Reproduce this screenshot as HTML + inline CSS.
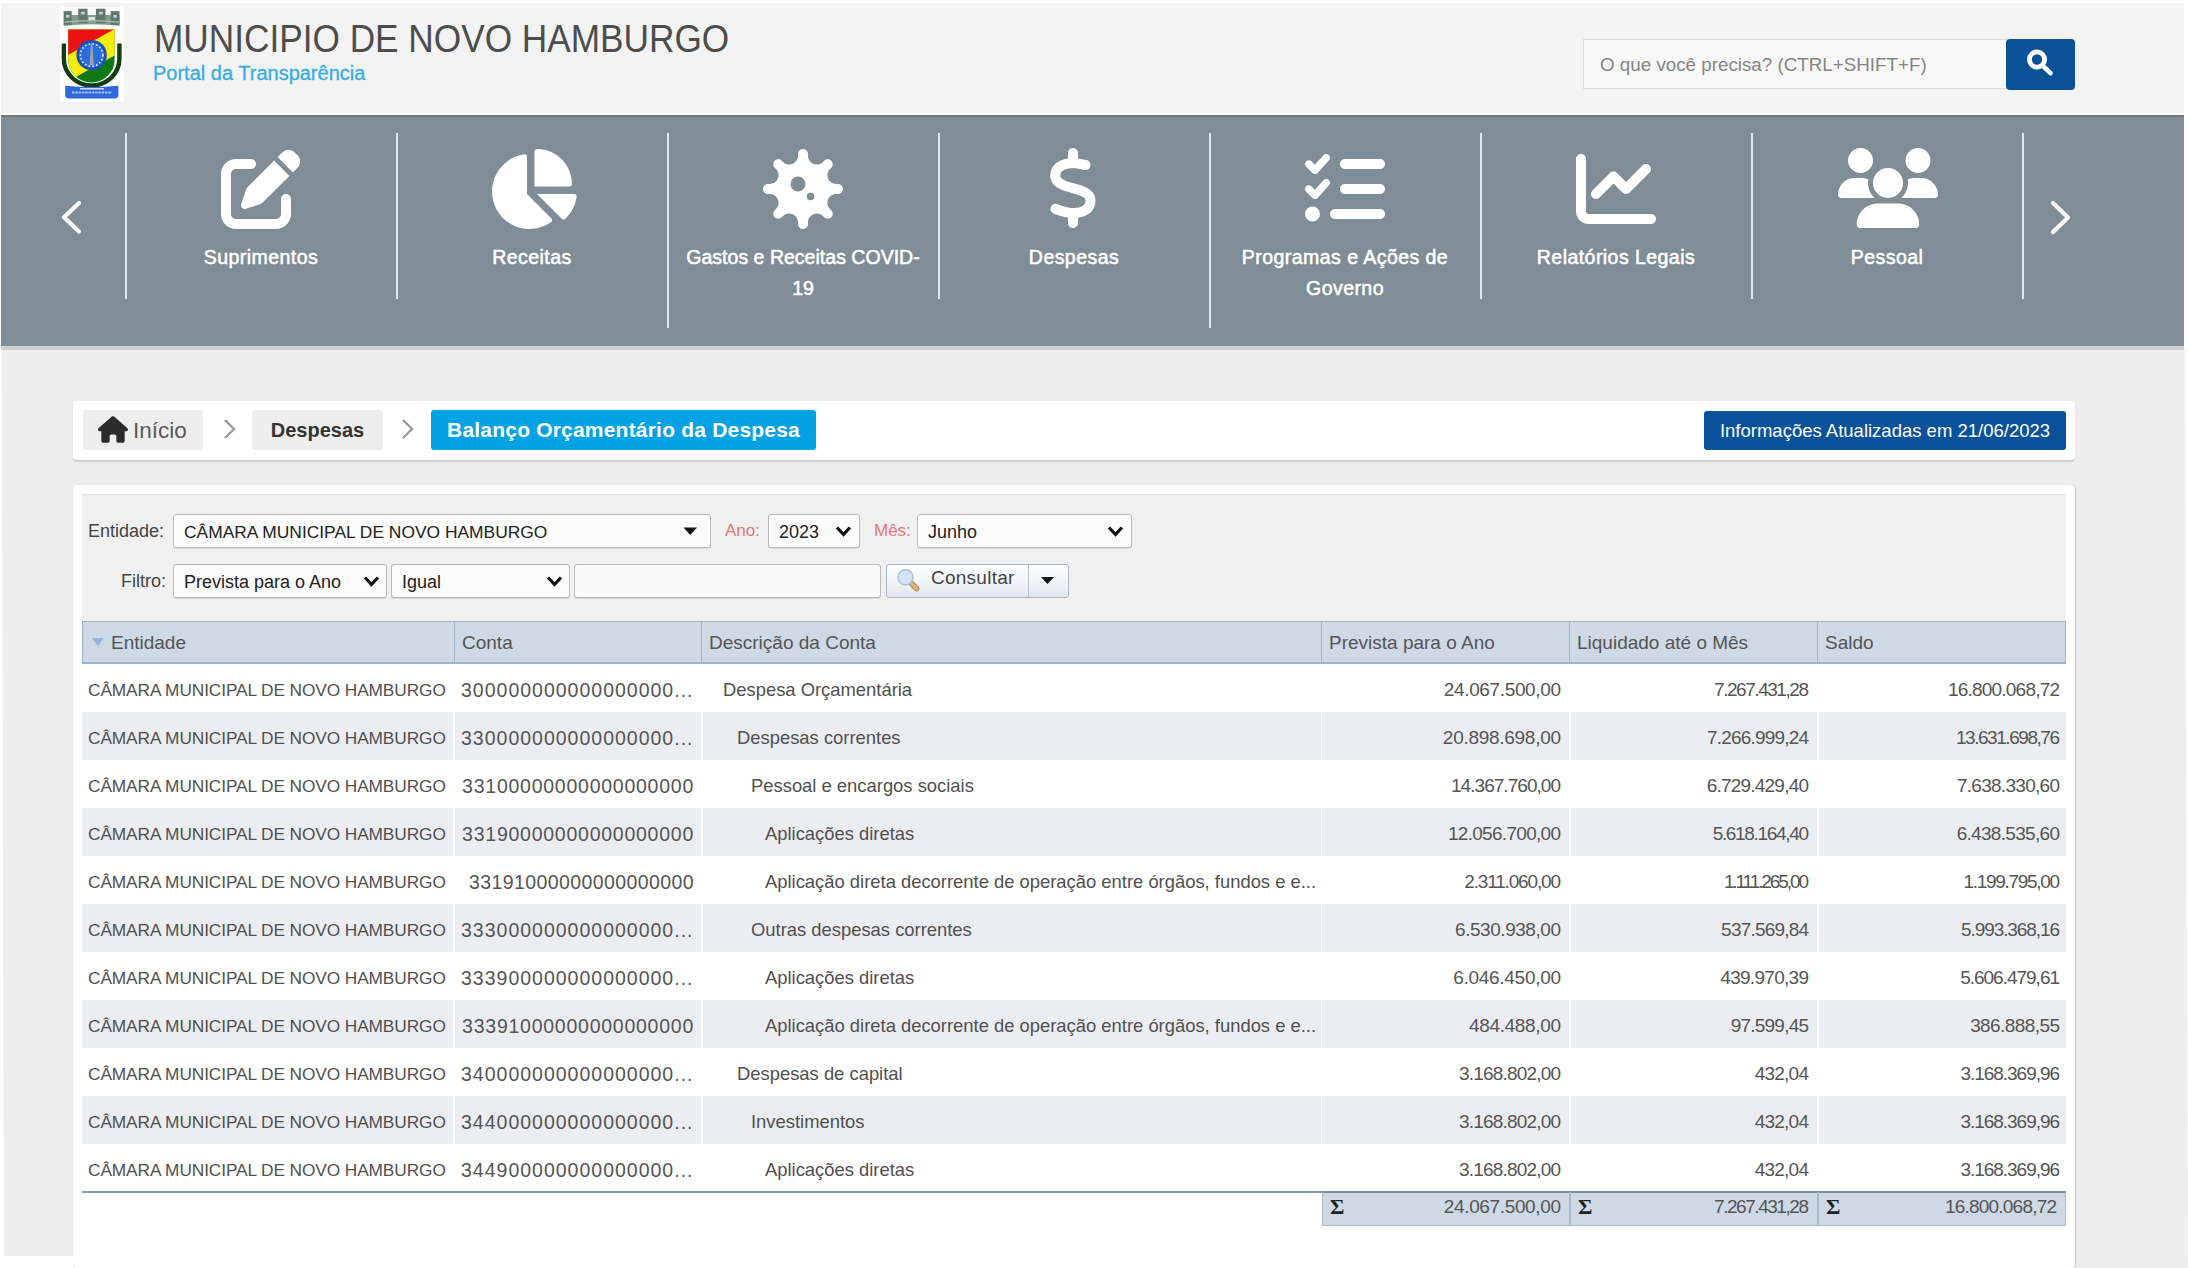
<!DOCTYPE html>
<html><head><meta charset="utf-8">
<style>
*{box-sizing:border-box;margin:0;padding:0}
html,body{width:2188px;height:1268px;overflow:hidden;background:#fff;font-family:"Liberation Sans",sans-serif}
.a{position:absolute}
#hdr{left:1px;top:3px;width:2183px;height:110px;background:#f3f3f3}
#title{left:154px;top:17px;font-size:39px;color:#4d4d4d;white-space:nowrap;transform:scaleX(0.903);transform-origin:0 0}
#sub{left:153px;top:62px;font-size:20px;color:#38ade3;white-space:nowrap;-webkit-text-stroke:0.3px #38ade3}
#search{left:1583px;top:39px;width:424px;height:50px;background:#f8f8f8;border:1px solid #dcdcdc;border-right:none}
#search span{position:absolute;left:16px;top:14px;font-size:18.8px;color:#858585;white-space:nowrap}
#sbtn{left:2006px;top:39px;width:69px;height:51px;background:#0a5197;border-radius:4px}
#nav{left:1px;top:115px;width:2183px;height:231px;background:#7f8d96;border-top:2px solid #6f7a80}
#navsh{left:1px;top:346px;width:2183px;height:4px;background:#d0d0d0}
#content{left:0;top:350px;width:2188px;height:918px;background:#eeeeee;clip-path:polygon(1.5px 0,2185px 0,2188px 918px,73px 918px,73px 906px,4px 906px)}
#contentR{display:none}
.div{width:2px;background:#dde8ef}
.lbl{color:#fff;font-weight:normal;font-size:19.5px;letter-spacing:0.45px;-webkit-text-stroke:0.55px #fff;text-align:center;line-height:31px;width:240px;white-space:nowrap}
.ico{fill:#fff}
#crumbs{left:73px;top:401px;width:2002px;height:59px;background:#fff;border-radius:4px;box-shadow:0 2px 1px #cfcfcf}
.crumb{height:40px;top:410px;border-radius:3px;font-size:20px;line-height:40px;white-space:nowrap}
#panel{left:73px;top:485px;width:2002px;height:783px;background:#fff;border-radius:4px;box-shadow:1px 0 1px #c8c8c8}
#fpanel{left:82px;top:494px;width:1984px;height:127px;background:#f0f0f0;border-top:1px solid #e0e0e0}
.flbl{font-size:18px;color:#444;white-space:nowrap;margin-top:1px}
.sel{background:#fbfbfc;border:1px solid #b9b9bb;border-radius:3px;box-shadow:0 1px 0 #d8d8d8;font-size:18px;color:#222;white-space:nowrap;line-height:34px;padding-left:10px}
.th{top:621px;height:43px;background:#cdd9e5;border-top:1px solid #9fb3c8;border-bottom:2px solid #9fb3c8;font-size:19px;color:#555;line-height:42px;padding-left:7px;white-space:nowrap}
.row{left:82px;width:1984px;height:48px}
.c{position:absolute;top:0;height:48px;line-height:52px;font-size:17px;color:#505050;white-space:nowrap;overflow:hidden}
.alt .c{background:#ebedf2}
.r{text-align:right}

.ent{font-size:17.3px;letter-spacing:-0.1px}
.cod{font-size:19.5px;letter-spacing:0.5px;color:#555}
.dsc{font-size:18.4px}
.num{font-size:19px;line-height:51px;color:#555}
.sum{top:1191px;width:248px;height:35px;background:#cdd9e5;border-top:2px solid #7e8c9a;border-bottom:1px solid #a9bbcf;border-left:1px solid #a9bbcf;border-right:1px solid #a9bbcf;font-family:"Liberation Serif",serif;font-weight:bold;font-size:22px;color:#222;line-height:27px;padding-left:7px}
.sum > span{position:absolute;right:8px;top:0;font-family:"Liberation Sans",sans-serif;font-weight:normal;font-size:19px;color:#555}
</style></head><body>
<div class="a" id="hdr"></div>
<!-- logo -->
<svg class="a" style="left:60px;top:7px" width="64" height="95" viewBox="0 0 64 95">
  <defs><clipPath id="sh"><path d="M8.2 22.5 H54.6 V53 A23.2 22.4 0 0 1 8.2 53 Z"/></clipPath></defs>
  <rect x="0" y="0" width="64" height="95" fill="#fcfcfc"/>
  <path d="M4 8 H59.5 V18.8 Q31.6 15.8 4 18.8 Z" fill="#86998f"/>
  <rect x="3.6" y="4.1" width="8.1" height="14" fill="#62786e"/>
  <rect x="18.2" y="1.7" width="9.3" height="14.5" fill="#62786e"/>
  <rect x="35.9" y="1.7" width="9.6" height="14.5" fill="#62786e"/>
  <rect x="50.8" y="4.1" width="8.7" height="14" fill="#62786e"/>
  <rect x="6" y="8" width="3.4" height="2.6" fill="#c3d4cb"/><rect x="21" y="4.8" width="3.8" height="2.6" fill="#c3d4cb"/>
  <rect x="39" y="4.8" width="3.8" height="2.6" fill="#c3d4cb"/><rect x="53.4" y="8" width="3.4" height="2.6" fill="#c3d4cb"/>
  <rect x="28.5" y="10" width="6.5" height="4" fill="#d7e3dc"/>
  <path d="M4.5 15.2 Q31.6 12 59 15.2" fill="none" stroke="#a9bcb2" stroke-width="1.3"/>
  <g clip-path="url(#sh)">
    <rect x="0" y="0" width="64" height="95" fill="#0f7a13"/>
    <path d="M0 0 H64 V43.3 L0 78.8 Z" fill="#f4ee0a"/>
    <path d="M0 0 H64 V16.7 L0 52.5 Z" fill="#ec1010"/>
  </g>
  <circle cx="31.6" cy="48.1" r="15.2" fill="#1d4fb8"/>
  <circle cx="31.6" cy="48.1" r="12.6" fill="#2c6ee0"/>
  <circle cx="31.6" cy="48.1" r="11.2" fill="none" stroke="#e8eef8" stroke-width="1.6" stroke-dasharray="1.6 2.2"/>
  <path d="M31 37 h1.3 l1.5 21 h-4.3z" fill="#98a3a3"/>
  <path d="M1.7 36.4 H6 V52 A25.6 24.3 0 0 0 57.2 52 V36.4 H61.6 V52 A29.9 28.6 0 0 1 1.7 52 Z" fill="#123d10"/>
  <path d="M5.2 78.8 Q31.6 81.5 58.4 78.8 V88 Q58.4 91.5 54 91.5 H9.6 Q5.2 91.5 5.2 88 Z" fill="#2e68dc"/>
  <path d="M12 85.5 H52" fill="none" stroke="#a9c2f2" stroke-width="2.2" stroke-dasharray="2.5 0.8"/>
  <path d="M20 81.8 H44" fill="none" stroke="#dfe8fb" stroke-width="1.4"/>
</svg>
<div class="a" id="title">MUNICIPIO DE NOVO HAMBURGO</div>
<div class="a" id="sub">Portal da Transparência</div>
<div class="a" id="search"><span>O que você precisa? (CTRL+SHIFT+F)</span></div>
<div class="a" id="sbtn">
  <svg class="a" style="left:0;top:0" width="69" height="51" viewBox="0 0 69 51"><circle cx="31" cy="20.5" r="7.6" fill="none" stroke="#fff" stroke-width="4.8"/><path d="M37 27 L44.5 34.2" stroke="#fff" stroke-width="4.6" stroke-linecap="round"/></svg>
</div>

<div class="a" id="nav"></div>
<div class="a" id="navsh"></div>
<!-- nav -->
<svg class="a" style="left:58px;top:200px" width="26" height="36" viewBox="0 0 26 36"><path d="M21 3 L6 17.2 L21 31.5" fill="none" stroke="#fff" stroke-width="4.2" stroke-linecap="round" stroke-linejoin="round"/></svg>
<svg class="a" style="left:2048px;top:200px" width="26" height="36" viewBox="0 0 26 36"><path d="M5 3 L20 17.6 L5 32" fill="none" stroke="#fff" stroke-width="4.2" stroke-linecap="round" stroke-linejoin="round"/></svg>
<div class="a div" style="left:125px;top:133px;height:166px"></div>
<div class="a div" style="left:396px;top:133px;height:166px"></div>
<div class="a div" style="left:667px;top:133px;height:195px"></div>
<div class="a div" style="left:938px;top:133px;height:166px"></div>
<div class="a div" style="left:1209px;top:133px;height:195px"></div>
<div class="a div" style="left:1480px;top:133px;height:166px"></div>
<div class="a div" style="left:1751px;top:133px;height:166px"></div>
<div class="a div" style="left:2022px;top:133px;height:166px"></div>
<svg class="a ico" style="left:221px;top:149px" width="80" height="80" viewBox="0 0 512 512"><path d="M471.6 21.7c-21.9-21.9-57.3-21.9-79.2 0L362.3 51.7l97.9 97.9 30.1-30.1c21.9-21.9 21.9-57.3 0-79.2L471.6 21.7zm-299.2 220c-6.1 6.1-10.8 13.6-13.5 21.9l-29.6 88.8c-2.9 8.6-.6 18.1 5.8 24.6s15.9 8.7 24.6 5.8l88.8-29.6c8.2-2.7 15.7-7.4 21.9-13.5L437.7 172.3 339.7 74.3 172.4 241.7zM96 64C43 64 0 107 0 160V416c0 53 43 96 96 96H352c53 0 96-43 96-96V320c0-17.7-14.3-32-32-32s-32 14.3-32 32v96c0 17.7-14.3 32-32 32H96c-17.7 0-32-14.3-32-32V160c0-17.7 14.3-32 32-32h96c17.7 0 32-14.3 32-32s-14.3-32-32-32H96z"/></svg>
<svg class="a ico" style="left:487px;top:149px" width="90" height="80" viewBox="0 0 576 512"><path d="M304 240V16.6c0-9 7-16.6 16-16.6C443.7 0 544 100.3 544 224c0 9-7.6 16-16.6 16H304zM32 272C32 150.7 122.1 50.3 239 34.3c9.2-1.3 17 6.1 17 15.4V288L412.5 444.5c6.7 6.7 6.2 17.7-1.5 23.1C371.8 495.6 323.8 512 272 512C139.5 512 32 404.6 32 272zm526.4 16c9.3 0 16.6 7.8 15.4 17c-7.7 55.9-34.6 105.6-73.9 142.3c-6 5.6-15.4 5.2-21.2-.7L320 288H558.4z"/></svg>
<svg class="a ico" style="left:763px;top:149px" width="80" height="80" viewBox="0 0 512 512"><path d="M288 32c0-17.7-14.3-32-32-32s-32 14.3-32 32V43.5c0 49.9-60.3 74.9-95.6 39.6L120.2 74.9C107.7 62.4 87.5 62.4 75 74.9s-12.5 32.8 0 45.3l8.2 8.2C118.4 163.7 93.4 224 43.5 224H32c-17.7 0-32 14.3-32 32s14.3 32 32 32H43.5c49.9 0 74.9 60.3 39.6 95.6l-8.2 8.2c-12.5 12.5-12.5 32.8 0 45.3s32.8 12.5 45.3 0l8.2-8.2c35.3-35.3 95.6-10.3 95.6 39.6V480c0 17.7 14.3 32 32 32s32-14.3 32-32V468.5c0-49.9 60.3-74.9 95.6-39.6l8.2 8.2c12.5 12.5 32.8 12.5 45.3 0s12.5-32.8 0-45.3l-8.2-8.2c-35.3-35.3-10.3-95.6 39.6-95.6H480c17.7 0 32-14.3 32-32s-14.3-32-32-32H468.5c-49.9 0-74.9-60.3-39.6-95.6l8.2-8.2c12.5-12.5 12.5-32.8 0-45.3s-32.8-12.5-45.3 0l-8.2 8.2C348.3 118.4 288 93.4 288 43.5V32zM176 224a48 48 0 1 1 96 0 48 48 0 1 1 -96 0zm128 56a24 24 0 1 1 0 48 24 24 0 1 1 0-48z"/></svg>
<svg class="a ico" style="left:1048px;top:148px" width="50" height="80" viewBox="0 0 320 512"><path d="M160 0c17.7 0 32 14.3 32 32V67.7c1.6 .2 3.1 .4 4.7 .7c.4 .1 .7 .1 1.1 .2l48 8.8c17.4 3.2 28.9 19.9 25.7 37.2s-19.9 28.9-37.2 25.7l-47.5-8.7c-31.3-4.6-58.9-1.5-78.3 6.2s-27.2 18.3-29 28.1c-2 10.7-.5 16.7 1.2 20.4c1.8 3.9 5.5 8.3 12.8 13.2c16.3 10.7 41.3 17.7 73.7 26.3l2.9 .8c28.6 7.6 63.6 16.8 89.6 33.8c14.2 9.300 27.6 21.9 35.9 39.5c8.5 17.9 10.3 37.9 6.4 59.2c-6.9 38-33.1 63.4-65.6 76.7c-13.7 5.6-28.6 9.2-44.4 11V480c0 17.7-14.3 32-32 32s-32-14.3-32-32V445.1c-.4-.1-.9-.1-1.3-.2l-.2 0 0 0c-24.4-3.8-64.5-14.3-91.5-26.3c-16.1-7.2-23.4-26.1-16.2-42.2s26.1-23.4 42.2-16.2c20.9 9.3 55.3 18.5 75.2 21.6c31.9 4.7 58.2 2 76-5.3c16.9-6.9 24.6-16.9 26.8-28.9c1.900-10.6 .4-16.7-1.3-20.4c-1.9-4-5.6-8.4-13-13.3c-16.4-10.7-41.5-17.7-74-26.3l-2.8-.7 0 0C119.4 279.3 84.4 270 58.4 253c-14.2-9.3-27.5-22-35.8-39.6c-8.4-17.9-10.1-37.9-6.1-59.2C23.7 116 52.3 91.2 84.8 78.3c13.3-5.3 27.9-8.9 43.2-11V32c0-17.7 14.3-32 32-32z"/></svg>
<svg class="a ico" style="left:1305px;top:149px" width="80" height="80" viewBox="0 0 512 512"><path d="M152.1 38.2c9.9 8.9 10.7 24 1.8 33.9l-72 80c-4.4 4.9-10.6 7.8-17.200 7.9s-12.9-2.4-17.6-7L7 113C-2.3 103.6-2.3 88.4 7 79s24.6-9.4 33.9 0l22.1 22.1 55.1-61.2c8.9-9.9 24-10.7 33.9-1.8zm0 160c9.9 8.9 10.7 24 1.8 33.9l-72 80c-4.4 4.9-10.6 7.8-17.2 7.9s-12.9-2.4-17.6-7L7 273c-9.4-9.4-9.4-24.6 0-33.9s24.6-9.4 33.9 0l22.1 22.1 55.1-61.2c8.9-9.9 24-10.7 33.9-1.8zM224 96c0-17.7 14.3-32 32-32H480c17.7 0 32 14.3 32 32s-14.3 32-32 32H256c-17.7 0-32-14.3-32-32zm0 160c0-17.7 14.3-32 32-32H480c17.7 0 32 14.3 32 32s-14.3 32-32 32H256c-17.7 0-32-14.3-32-32zM160 416c0-17.7 14.3-32 32-32H480c17.7 0 32 14.3 32 32s-14.3 32-32 32H192c-17.7 0-32-14.3-32-32zM48 368a48 48 0 1 1 0 96 48 48 0 1 1 0-96z"/></svg>
<svg class="a ico" style="left:1576px;top:149px" width="80" height="80" viewBox="0 0 512 512"><path d="M64 64c0-17.7-14.3-32-32-32S0 46.3 0 64V400c0 44.2 35.8 80 80 80H480c17.7 0 32-14.3 32-32s-14.3-32-32-32H80c-8.8 0-16-7.2-16-16V64zm406.6 86.6c12.5-12.5 12.5-32.8 0-45.3s-32.8-12.5-45.3 0L320 210.7l-57.4-57.4c-12.5-12.5-32.8-12.5-45.3 0l-112 112c-12.5 12.5-12.5 32.8 0 45.3s32.8 12.5 45.3 0L240 221.3l57.4 57.4c12.5 12.5 32.8 12.5 45.3 0l128-128z"/></svg>
<svg class="a ico" style="left:1838px;top:148px" width="100" height="80" viewBox="0 0 640 512"><path d="M144 0a80 80 0 1 1 0 160A80 80 0 1 1 144 0zM512 0a80 80 0 1 1 0 160A80 80 0 1 1 512 0zM0 298.7C0 239.8 47.8 192 106.7 192h42.7c15.9 0 31 3.5 44.6 9.7c-1.3 7.2-1.9 14.7-1.9 22.3c0 38.2 16.8 72.5 43.3 96c-.2 0-.4 0-.7 0H21.3C9.6 320 0 310.4 0 298.7zM405.3 320c-.2 0-.4 0-.7 0c26.6-23.5 43.3-57.8 43.3-96c0-7.6-.7-15-1.9-22.3c13.600-6.3 28.7-9.7 44.6-9.7h42.7C592.2 192 640 239.8 640 298.7c0 11.8-9.6 21.3-21.3 21.3H405.3zM224 224a96 96 0 1 1 192 0 96 96 0 1 1 -192 0zM120 489.6C120 415.1 180.4 354.7 254.900 354.7H385.1C459.6 354.7 520 415.1 520 489.6c0 12.4-10 22.4-22.4 22.4H142.4C130 512 120 502 120 489.6z"/></svg>
<div class="a lbl" style="left:141px;top:242px">Suprimentos</div>
<div class="a lbl" style="left:412px;top:242px">Receitas</div>
<div class="a lbl" style="left:683px;top:242px;letter-spacing:0.02px">Gastos e Receitas COVID-<br>19</div>
<div class="a lbl" style="left:954px;top:242px">Despesas</div>
<div class="a lbl" style="left:1225px;top:242px">Programas e Ações de<br>Governo</div>
<div class="a lbl" style="left:1496px;top:242px">Relatórios Legais</div>
<div class="a lbl" style="left:1767px;top:242px">Pessoal</div>

<div class="a" id="content"></div>
<div class="a" id="contentR"></div>
<!-- breadcrumbs -->
<div class="a" id="crumbs"></div>
<div class="a crumb" style="left:83px;width:120px;background:#eeeeee;color:#555"></div>
<svg class="a" style="left:98px;top:416px" width="30" height="27" viewBox="0 0 576 512"><path fill="#2b2b2b" d="M575.8 255.5c0 18-15 32.1-32 32.1h-32l.7 160.2c0 2.7-.2 5.4-.5 8.1V472c0 22.1-17.9 40-40 40H456c-1.1 0-2.2 0-3.3-.1c-1.4 .1-2.8 .1-4.2 .1H416 392c-22.1 0-40-17.9-40-40V448 384c0-17.7-14.3-32-32-32H256c-17.7 0-32 14.3-32 32v64 24c0 22.1-17.9 40-40 40H160 128.1c-1.5 0-3-.1-4.5-.2c-1.2 .1-2.4 .2-3.600 .2H104c-22.1 0-40-17.9-40-40V360c0-.9 0-1.9 .1-2.8V287.6H32c-18 0-32-14-32-32.1c0-9 3-17 10-24L266.4 8c7-7 15-8 22-8s15 2 21 7L564.8 231.5c8 7 12 15 11 24z"/></svg>
<div class="a crumb" style="left:133px;top:411px;font-size:22.5px;color:#5a5a5a">Início</div>
<svg class="a" style="left:222px;top:417px" width="16" height="24" viewBox="0 0 16 24"><path d="M3 3 L12 12 L3 21" fill="none" stroke="#9a9a9a" stroke-width="2.4"/></svg>
<div class="a crumb" style="left:252px;width:131px;background:#eeeeee;color:#333;font-weight:bold;text-align:center">Despesas</div>
<svg class="a" style="left:400px;top:417px" width="16" height="24" viewBox="0 0 16 24"><path d="M3 3 L12 12 L3 21" fill="none" stroke="#9a9a9a" stroke-width="2.4"/></svg>
<div class="a crumb" style="left:431px;width:385px;background:#03a2e3;color:#fff;font-weight:bold;font-size:21px;text-align:center;letter-spacing:0.2px">Balanço Orçamentário da Despesa</div>
<div class="a crumb" style="left:1704px;top:411px;height:39px;width:362px;background:#08529a;color:#fff;font-size:18.5px;line-height:39px;text-align:center">Informações Atualizadas em 21/06/2023</div>


<!-- main panel -->
<div class="a" id="panel"></div>
<div class="a" id="fpanel"></div>
<div class="a flbl" style="left:88px;top:520px">Entidade:</div>
<div class="a sel" style="left:173px;top:514px;width:538px;height:34px;font-size:17.4px">CÂMARA MUNICIPAL DE NOVO HAMBURGO</div>
<svg class="a" style="left:683px;top:527px" width="15" height="9" viewBox="0 0 15 9"><path d="M0.5 0.5 H14 L7.25 8z" fill="#111"/></svg>
<div class="a flbl" style="left:725px;top:520px;color:#e8767a;font-size:17px">Ano:</div>
<div class="a sel" style="left:768px;top:514px;width:92px;height:34px">2023</div>
<svg class="a chev" style="left:835px;top:525px" width="17" height="13" viewBox="0 0 17 13"><path d="M2 2.5 L8.5 9.5 L15 2.5" fill="none" stroke="#111" stroke-width="3.2"/></svg>
<div class="a flbl" style="left:874px;top:520px;color:#e8767a;font-size:17px">Mês:</div>
<div class="a sel" style="left:917px;top:514px;width:215px;height:34px">Junho</div>
<svg class="a chev" style="left:1107px;top:525px" width="17" height="13" viewBox="0 0 17 13"><path d="M2 2.5 L8.5 9.5 L15 2.5" fill="none" stroke="#111" stroke-width="3.2"/></svg>
<div class="a flbl" style="left:121px;top:570px">Filtro:</div>
<div class="a sel" style="left:173px;top:564px;width:214px;height:34px">Prevista para o Ano</div>
<svg class="a chev" style="left:363px;top:575px" width="17" height="13" viewBox="0 0 17 13"><path d="M2 2.5 L8.5 9.5 L15 2.5" fill="none" stroke="#111" stroke-width="3.2"/></svg>
<div class="a sel" style="left:391px;top:564px;width:179px;height:34px">Igual</div>
<svg class="a chev" style="left:546px;top:575px" width="17" height="13" viewBox="0 0 17 13"><path d="M2 2.5 L8.5 9.5 L15 2.5" fill="none" stroke="#111" stroke-width="3.2"/></svg>
<div class="a sel" style="left:574px;top:564px;width:307px;height:34px;background:#fafafa"></div>
<div class="a" style="left:886px;top:564px;width:183px;height:34px;border:1px solid #a8b6c6;border-radius:3px;background:linear-gradient(#fdfdfd,#f3f5f8 50%,#dfe6ee)"></div>
<div class="a" style="left:1028px;top:565px;width:1px;height:32px;background:#b3c0ce"></div>
<svg class="a" style="left:896px;top:568px" width="26" height="24" viewBox="0 0 26 24"><path d="M15.5 15.5 L20.5 20.5" stroke="#b98a4c" stroke-width="5.6" stroke-linecap="round"/><path d="M15.5 15.5 L20.5 20.5" stroke="#e0b377" stroke-width="3.4" stroke-linecap="round"/><circle cx="9.5" cy="9.3" r="7.6" fill="#d3e2f6" stroke="#a9bed6" stroke-width="1.4"/></svg>
<div class="a" style="left:931px;top:567px;font-size:19px;color:#444;white-space:nowrap;line-height:22px;letter-spacing:0.25px">Consultar</div>
<svg class="a" style="left:1041px;top:577px" width="13" height="8" viewBox="0 0 13 8"><path d="M0 0 H13 L6.5 7z" fill="#111"/></svg>
<!-- table header -->
<div class="a th" style="left:82px;width:373px;border-left:1px solid #9fb3c8;padding-left:28px">Entidade</div>
<svg class="a" style="left:92px;top:638px" width="13" height="9" viewBox="0 0 13 9"><path d="M0 0 H12 L6 8z" fill="#8db6e2"/></svg>
<div class="a th" style="left:454px;width:248px;border-left:1px solid #9fb3c8">Conta</div>
<div class="a th" style="left:701px;width:621px;border-left:1px solid #9fb3c8">Descrição da Conta</div>
<div class="a th" style="left:1321px;width:249px;border-left:1px solid #9fb3c8">Prevista para o Ano</div>
<div class="a th" style="left:1569px;width:249px;border-left:1px solid #9fb3c8">Liquidado até o Mês</div>
<div class="a th" style="left:1817px;width:249px;border-left:1px solid #9fb3c8;border-right:1px solid #9fb3c8">Saldo</div>
<!-- rows -->
<div class="row a" style="top:664px"><div class="c ent" style="left:0;width:371px;padding-left:6px">CÂMARA MUNICIPAL DE NOVO HAMBURGO</div><div class="c cod" style="left:373px;width:246px;padding-left:6px;letter-spacing:1px">300000000000000000...</div><div class="c dsc" style="left:621px;width:618px;padding-left:20px">Despesa Orçamentária</div><div class="c num r" style="left:1240px;width:247px;padding-right:8px"><span style="letter-spacing:-0.36px;margin-right:0.36px">24.067.500,00</span></div><div class="c num r" style="left:1489px;width:246px;padding-right:8px"><span style="letter-spacing:-1.45px;margin-right:1.45px">7.267.431,28</span></div><div class="c num r" style="left:1737px;width:247px;padding-right:6px"><span style="letter-spacing:-0.79px;margin-right:0.79px">16.800.068,72</span></div></div>
<div class="row a alt" style="top:712px"><div class="c ent" style="left:0;width:371px;padding-left:6px">CÂMARA MUNICIPAL DE NOVO HAMBURGO</div><div class="c cod" style="left:373px;width:246px;padding-left:6px;letter-spacing:1px">330000000000000000...</div><div class="c dsc" style="left:621px;width:618px;padding-left:34px">Despesas correntes</div><div class="c num r" style="left:1240px;width:247px;padding-right:8px"><span style="letter-spacing:-0.28px;margin-right:0.28px">20.898.698,00</span></div><div class="c num r" style="left:1489px;width:246px;padding-right:8px"><span style="letter-spacing:-0.81px;margin-right:0.81px">7.266.999,24</span></div><div class="c num r" style="left:1737px;width:247px;padding-right:6px"><span style="letter-spacing:-1.45px;margin-right:1.45px">13.631.698,76</span></div></div>
<div class="row a" style="top:760px"><div class="c ent" style="left:0;width:371px;padding-left:6px">CÂMARA MUNICIPAL DE NOVO HAMBURGO</div><div class="c cod" style="left:373px;width:246px;text-align:right;padding-right:7px;letter-spacing:0.75px">33100000000000000000</div><div class="c dsc" style="left:621px;width:618px;padding-left:48px">Pessoal e encargos sociais</div><div class="c num r" style="left:1240px;width:247px;padding-right:8px"><span style="letter-spacing:-0.96px;margin-right:0.96px">14.367.760,00</span></div><div class="c num r" style="left:1489px;width:246px;padding-right:8px"><span style="letter-spacing:-0.78px;margin-right:0.78px">6.729.429,40</span></div><div class="c num r" style="left:1737px;width:247px;padding-right:6px"><span style="letter-spacing:-0.71px;margin-right:0.71px">7.638.330,60</span></div></div>
<div class="row a alt" style="top:808px"><div class="c ent" style="left:0;width:371px;padding-left:6px">CÂMARA MUNICIPAL DE NOVO HAMBURGO</div><div class="c cod" style="left:373px;width:246px;text-align:right;padding-right:7px;letter-spacing:0.75px">33190000000000000000</div><div class="c dsc" style="left:621px;width:618px;padding-left:62px">Aplicações diretas</div><div class="c num r" style="left:1240px;width:247px;padding-right:8px"><span style="letter-spacing:-0.70px;margin-right:0.70px">12.056.700,00</span></div><div class="c num r" style="left:1489px;width:246px;padding-right:8px"><span style="letter-spacing:-1.33px;margin-right:1.33px">5.618.164,40</span></div><div class="c num r" style="left:1737px;width:247px;padding-right:6px"><span style="letter-spacing:-0.69px;margin-right:0.69px">6.438.535,60</span></div></div>
<div class="row a" style="top:856px"><div class="c ent" style="left:0;width:371px;padding-left:6px">CÂMARA MUNICIPAL DE NOVO HAMBURGO</div><div class="c cod" style="left:373px;width:246px;text-align:right;padding-right:7px;letter-spacing:0.40px">33191000000000000000</div><div class="c dsc" style="left:621px;width:618px;padding-left:62px">Aplicação direta decorrente de operação entre órgãos, fundos e e...</div><div class="c num r" style="left:1240px;width:247px;padding-right:8px"><span style="letter-spacing:-1.16px;margin-right:1.16px">2.311.060,00</span></div><div class="c num r" style="left:1489px;width:246px;padding-right:8px"><span style="letter-spacing:-2.09px;margin-right:2.09px">1.111.265,00</span></div><div class="c num r" style="left:1737px;width:247px;padding-right:6px"><span style="letter-spacing:-1.31px;margin-right:1.31px">1.199.795,00</span></div></div>
<div class="row a alt" style="top:904px"><div class="c ent" style="left:0;width:371px;padding-left:6px">CÂMARA MUNICIPAL DE NOVO HAMBURGO</div><div class="c cod" style="left:373px;width:246px;padding-left:6px;letter-spacing:1px">333000000000000000...</div><div class="c dsc" style="left:621px;width:618px;padding-left:48px">Outras despesas correntes</div><div class="c num r" style="left:1240px;width:247px;padding-right:8px"><span style="letter-spacing:-0.45px;margin-right:0.45px">6.530.938,00</span></div><div class="c num r" style="left:1489px;width:246px;padding-right:8px"><span style="letter-spacing:-0.80px;margin-right:0.80px">537.569,84</span></div><div class="c num r" style="left:1737px;width:247px;padding-right:6px"><span style="letter-spacing:-1.09px;margin-right:1.09px">5.993.368,16</span></div></div>
<div class="row a" style="top:952px"><div class="c ent" style="left:0;width:371px;padding-left:6px">CÂMARA MUNICIPAL DE NOVO HAMBURGO</div><div class="c cod" style="left:373px;width:246px;padding-left:6px;letter-spacing:1px">333900000000000000...</div><div class="c dsc" style="left:621px;width:618px;padding-left:62px">Aplicações diretas</div><div class="c num r" style="left:1240px;width:247px;padding-right:8px"><span style="letter-spacing:-0.29px;margin-right:0.29px">6.046.450,00</span></div><div class="c num r" style="left:1489px;width:246px;padding-right:8px"><span style="letter-spacing:-0.71px;margin-right:0.71px">439.970,39</span></div><div class="c num r" style="left:1737px;width:247px;padding-right:6px"><span style="letter-spacing:-1.01px;margin-right:1.01px">5.606.479,61</span></div></div>
<div class="row a alt" style="top:1000px"><div class="c ent" style="left:0;width:371px;padding-left:6px">CÂMARA MUNICIPAL DE NOVO HAMBURGO</div><div class="c cod" style="left:373px;width:246px;text-align:right;padding-right:7px;letter-spacing:0.75px">33391000000000000000</div><div class="c dsc" style="left:621px;width:618px;padding-left:62px">Aplicação direta decorrente de operação entre órgãos, fundos e e...</div><div class="c num r" style="left:1240px;width:247px;padding-right:8px"><span style="letter-spacing:-0.34px;margin-right:0.34px">484.488,00</span></div><div class="c num r" style="left:1489px;width:246px;padding-right:8px"><span style="letter-spacing:-0.78px;margin-right:0.78px">97.599,45</span></div><div class="c num r" style="left:1737px;width:247px;padding-right:6px"><span style="letter-spacing:-0.58px;margin-right:0.58px">386.888,55</span></div></div>
<div class="row a" style="top:1048px"><div class="c ent" style="left:0;width:371px;padding-left:6px">CÂMARA MUNICIPAL DE NOVO HAMBURGO</div><div class="c cod" style="left:373px;width:246px;padding-left:6px;letter-spacing:1px">340000000000000000...</div><div class="c dsc" style="left:621px;width:618px;padding-left:34px">Despesas de capital</div><div class="c num r" style="left:1240px;width:247px;padding-right:8px"><span style="letter-spacing:-0.82px;margin-right:0.82px">3.168.802,00</span></div><div class="c num r" style="left:1489px;width:246px;padding-right:8px"><span style="letter-spacing:-0.75px;margin-right:0.75px">432,04</span></div><div class="c num r" style="left:1737px;width:247px;padding-right:6px"><span style="letter-spacing:-1.04px;margin-right:1.04px">3.168.369,96</span></div></div>
<div class="row a alt" style="top:1096px"><div class="c ent" style="left:0;width:371px;padding-left:6px">CÂMARA MUNICIPAL DE NOVO HAMBURGO</div><div class="c cod" style="left:373px;width:246px;padding-left:6px;letter-spacing:1px">344000000000000000...</div><div class="c dsc" style="left:621px;width:618px;padding-left:48px">Investimentos</div><div class="c num r" style="left:1240px;width:247px;padding-right:8px"><span style="letter-spacing:-0.82px;margin-right:0.82px">3.168.802,00</span></div><div class="c num r" style="left:1489px;width:246px;padding-right:8px"><span style="letter-spacing:-0.75px;margin-right:0.75px">432,04</span></div><div class="c num r" style="left:1737px;width:247px;padding-right:6px"><span style="letter-spacing:-1.04px;margin-right:1.04px">3.168.369,96</span></div></div>
<div class="row a" style="top:1144px"><div class="c ent" style="left:0;width:371px;padding-left:6px">CÂMARA MUNICIPAL DE NOVO HAMBURGO</div><div class="c cod" style="left:373px;width:246px;padding-left:6px;letter-spacing:1px">344900000000000000...</div><div class="c dsc" style="left:621px;width:618px;padding-left:62px">Aplicações diretas</div><div class="c num r" style="left:1240px;width:247px;padding-right:8px"><span style="letter-spacing:-0.82px;margin-right:0.82px">3.168.802,00</span></div><div class="c num r" style="left:1489px;width:246px;padding-right:8px"><span style="letter-spacing:-0.75px;margin-right:0.75px">432,04</span></div><div class="c num r" style="left:1737px;width:247px;padding-right:6px"><span style="letter-spacing:-1.04px;margin-right:1.04px">3.168.369,96</span></div></div>
<!-- /rows -->
<!-- summary -->
<div class="a" style="left:82px;top:1191px;width:1240px;height:2px;background:#8a97a4"></div>
<div class="a sum" style="left:1322px">Σ<span><span style="letter-spacing:-0.36px;margin-right:0.36px">24.067.500,00</span></span></div>
<div class="a sum" style="left:1570px">Σ<span><span style="letter-spacing:-1.45px;margin-right:1.45px">7.267.431,28</span></span></div>
<div class="a sum" style="left:1818px">Σ<span><span style="letter-spacing:-0.79px;margin-right:0.79px">16.800.068,72</span></span></div>
<!-- /summary -->
</body></html>
